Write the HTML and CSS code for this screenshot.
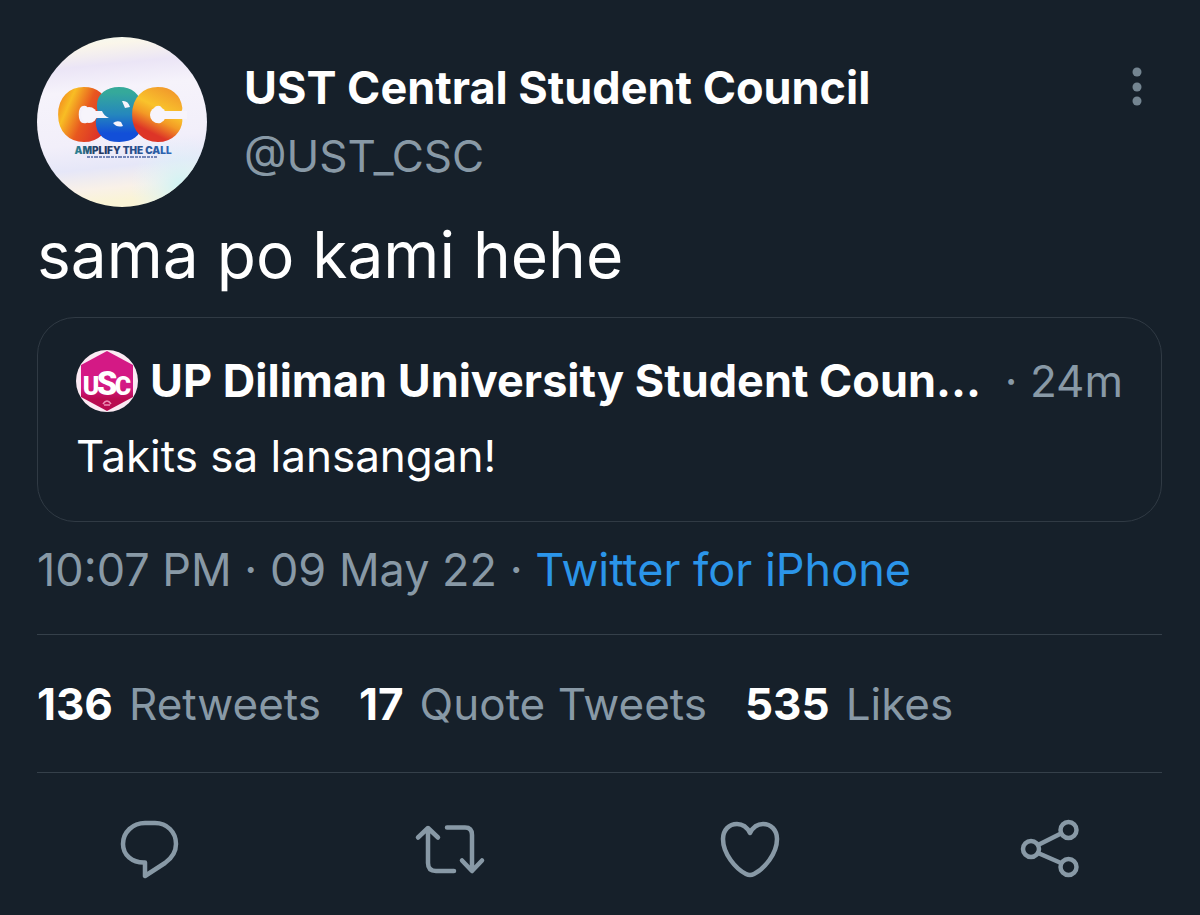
FILE: index.html
```html
<!DOCTYPE html>
<html lang="en">
<head>
<meta charset="utf-8">
<meta name="viewport" content="width=device-width, initial-scale=1">
<title>UST Central Student Council</title>
<link rel="stylesheet" href="styles.css">
</head>
<body>
<article class="tweet">
  <header class="author">
    <svg class="avatar" viewBox="0 0 170 170" role="img" aria-label="CSC Amplify the Call">
      <defs>
        <linearGradient id="paper" x1="0" y1="0" x2="0.1" y2="1">
          <stop offset="0" stop-color="#f2fbf3"/><stop offset="0.08" stop-color="#faf6ea"/>
          <stop offset="0.2" stop-color="#ebe5f6"/><stop offset="0.34" stop-color="#f6f3fb"/>
          <stop offset="0.65" stop-color="#f2effa"/><stop offset="0.8" stop-color="#e6e7f8"/>
          <stop offset="0.92" stop-color="#f9f1e8"/><stop offset="1" stop-color="#faf4d6"/>
        </linearGradient>
        <radialGradient id="glow" cx="0.85" cy="0.88" r="0.3">
          <stop offset="0" stop-color="#cdf3f4"/><stop offset="1" stop-color="#e6f4fa" stop-opacity="0"/>
        </radialGradient>
        <linearGradient id="c1" x1="0" y1="0" x2="1" y2="0.7">
          <stop offset="0" stop-color="#ef6a1c"/><stop offset="0.3" stop-color="#f8bd24"/>
          <stop offset="0.6" stop-color="#e8571f"/><stop offset="1" stop-color="#d92a2c"/>
        </linearGradient>
        <linearGradient id="s1" x1="0" y1="0" x2="0" y2="1">
          <stop offset="0.2" stop-color="#35a99a"/><stop offset="0.5" stop-color="#2587bd"/><stop offset="0.75" stop-color="#124fd8"/>
        </linearGradient>
        <linearGradient id="c2" x1="0.8" y1="0" x2="0.5" y2="1">
          <stop offset="0.1" stop-color="#f0922b"/><stop offset="0.45" stop-color="#f9c32c"/>
          <stop offset="0.6" stop-color="#f39a25"/><stop offset="0.8" stop-color="#dd3527"/>
        </linearGradient>
        <linearGradient id="ink" x1="0" y1="0" x2="1" y2="0">
          <stop offset="0" stop-color="#2e8796"/><stop offset="0.25" stop-color="#22365f"/><stop offset="1" stop-color="#2e68b8"/>
        </linearGradient>
      </defs>
      <circle cx="85" cy="85" r="85" fill="url(#paper)"/>
      <circle cx="85" cy="85" r="85" fill="url(#glow)"/>
      <g class="logo-letters">
        <text x="23" y="100" fill="url(#c1)" stroke="url(#c1)">C</text>
        <text x="61" y="100" fill="url(#s1)" stroke="url(#s1)">S</text>
        <text x="97" y="100" fill="url(#c2)" stroke="url(#c2)">C</text>
      </g>
      <g fill="#f7f4fb">
        <circle cx="52" cy="78" r="8"/><path d="M56 74h9q2 5 7 7H56Z"/>
        <circle cx="121" cy="78" r="8"/><path d="M124 74h26v8h-26Z"/>
        <path d="M85 64q6-1 8 6l-5 1ZM76 86q4-3 8-1l2 4q-6 2-10-3Z"/>
      </g>
      <text class="logo-line" x="86" y="117" fill="url(#ink)">AMPLIFY THE CALL</text>
      <path d="M50 120h70" stroke="#7486b8" stroke-width="2" stroke-dasharray="3 1 2 1 4 1"/>
    </svg>
    <div class="names">
      <h1 class="name">UST Central Student Council</h1>
      <a class="handle" href="#">@UST_CSC</a>
    </div>
    <button class="more" type="button" aria-label="More">
      <svg width="10" height="40" viewBox="0 0 10 40" fill="currentColor"><circle cx="5" cy="5" r="4.5"/><circle cx="5" cy="20" r="4.5"/><circle cx="5" cy="34" r="4.5"/></svg>
    </button>
  </header>
  <p class="text">sama po kami hehe</p>
  <section class="quote">
    <div class="quote-head">
      <svg class="mini" viewBox="0 0 62 62" role="img" aria-label="USC">
        <defs><linearGradient id="hex" x1="0" y1="0" x2="0" y2="1"><stop offset="0.6" stop-color="#d41985"/><stop offset="0.8" stop-color="#b90b50"/></linearGradient></defs>
        <circle cx="31" cy="31" r="31" fill="#fbeaf3"/>
        <path d="M31 1 57 15V47L31 61 5 47V15Z" fill="url(#hex)"/>
        <g class="mini-letters"><text x="15" y="45" font-size="25">U</text><text x="31" y="45" font-size="33">S</text><text x="47" y="45" font-size="25">C</text></g>
        <path d="M27 54q4-6 8 0M28 55h6" fill="none" stroke="#ec8eb5" stroke-width="1.5"/>
      </svg>
      <h2 class="quote-name">UP Diliman University Student Coun...</h2>
      <span class="age">· 24m</span>
    </div>
    <p class="quote-text">Takits sa lansangan!</p>
  </section>
  <p class="meta">10:07 PM · 09 May 22 · <a href="#">Twitter for iPhone</a></p>
  <div class="stats">
    <a href="#"><b>136</b> Retweets</a>
    <a href="#"><b>17</b> Quote Tweets</a>
    <a href="#"><b>535</b> Likes</a>
  </div>
</article>
<nav class="actions" aria-label="Tweet actions">
  <button type="button" aria-label="Reply"><svg class="icon" viewBox="0 0 72 64"><path d="M31 6H41C53 6 62 15 62 27C62 35 58 41 51 46L31 59V45.500C18 46 9 38 9 27C9 15 19 6 31 6Z"/></svg></button>
  <button type="button" aria-label="Retweet"><svg class="icon" viewBox="0 0 72 64"><path d="M4 20.500 14 11 24 20.500M14 12V46Q14 54 22 54H40M33 10.500H51Q58 10.500 58 18V53M48 43.500 58 54 68 43.500"/></svg></button>
  <button type="button" aria-label="Like"><svg class="icon" viewBox="0 0 72 64"><path d="M36 16C33 10 28 7 23 7C15 7 9 13 9 22C9 37 22 52 32 57Q36 59 40 57C50 52 63 37 63 22C63 13 57 7 49 7C44 7 39 10 36 16Z"/></svg></button>
  <button type="button" aria-label="Share"><svg class="icon" viewBox="0 0 72 64"><circle cx="17" cy="32" r="8"/><circle cx="54.500" cy="13" r="8"/><circle cx="54.500" cy="50" r="8"/><path d="M24 28 47 16.500M24 36 47 46"/></svg></button>
</nav>
</body>
</html>
```
FILE: styles.css
```css
* { box-sizing: border-box; }
body {
  margin: 0;
  background: #16202a;
  color: #fff;
  font-family: Inter, "Liberation Sans", sans-serif;
  font-size: 44px;
  line-height: 56px;
}
h1, h2, p { margin: 0; font-size: inherit; }
a { color: inherit; text-decoration: none; }
button { padding: 0; border: 0; background: none; color: #8899a6; cursor: pointer; }
svg { display: block; }
.tweet { padding: 37px 38px 0 37px; }
.author { display: flex; align-items: flex-start; }
.avatar { width: 170px; height: 170px; flex: none; }
.names { flex: 1; min-width: 0; margin-left: 37px; padding-top: 23px; }
.name, .quote-name, .meta { font-size: 45px; }
.name { font-weight: 700; white-space: nowrap; }
.handle { display: block; margin-top: 12px; color: #8899a6; }
.more { margin: 30px 20px 0 0; color: #748591; }
.logo-letters { font-size: 62px; font-weight: 900; stroke-width: 8px; stroke-linejoin: round; }
.logo-line { font-size: 10px; font-weight: 900; text-anchor: middle; }
.text { margin-top: 6px; font-size: 64px; line-height: 84px; }
.quote {
  margin-top: 20px;
  padding: 32px 38px;
  border: 1px solid #303a44;
  border-radius: 38px;
}
.quote-head { display: flex; align-items: center; }
.mini { width: 62px; height: 62px; flex: none; }
.mini-letters { fill: #fff; font-family: Roboto, "Liberation Sans", sans-serif; font-weight: 900; text-anchor: middle; }
.quote-name { flex: 1; min-width: 0; margin-left: 12px; white-space: nowrap; }
.age { color: #8899a6; }
.quote-text { margin-top: 16px; padding-bottom: 5px; }
.meta { margin-top: 20px; padding-bottom: 36px; color: #8899a6; }
.meta a { color: #2b95e9; }
.stats {
  display: flex;
  gap: 38px;
  padding: 41px 0 40px;
  border: solid #35404a;
  border-width: 1px 0;
  color: #8899a6;
}
.stats a { display: flex; gap: 16px; }
.stats b { color: #fff; }
.actions { display: grid; grid-template-columns: repeat(4, 1fr); padding: 44px 0 34px; }
.actions button { display: flex; justify-content: center; }
.icon {
  width: 72px;
  height: 64px;
  fill: none;
  stroke: currentColor;
  stroke-width: 4.500;
  stroke-linecap: round;
  stroke-linejoin: round;
}
```
